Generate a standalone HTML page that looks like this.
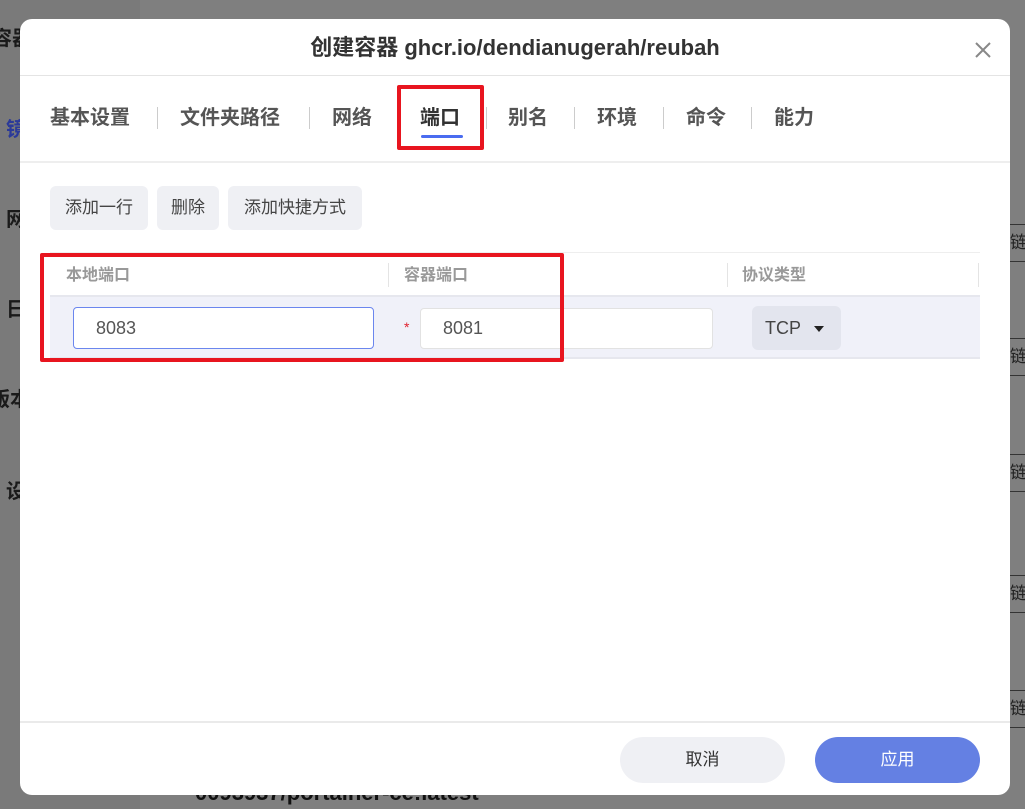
<!DOCTYPE html>
<html><head><meta charset="utf-8"><style>
*{margin:0;padding:0;box-sizing:border-box}
body{width:1025px;height:809px;overflow:hidden;background:#7f7f7f;position:relative;font-family:"Liberation Sans","Noto Sans CJK SC",sans-serif}
.a{position:absolute}
.bg{color:#1a1a1a;font-weight:bold;font-size:20px;line-height:24px}
.lk{position:absolute;left:1010px;width:40px;height:38px;border-top:1px solid #333;border-bottom:1px solid #333;font-size:17px;color:#222;line-height:36px;white-space:nowrap;overflow:hidden}
.modal{left:20px;top:19px;width:990px;height:776px;background:#fff;border-radius:12px;overflow:hidden}
.tab{position:absolute;top:87px;font-size:20px;line-height:24px;font-weight:bold;color:#555}
.sep{position:absolute;top:88px;width:1px;height:22px;background:#ccc}
.btn{position:absolute;top:167px;height:44px;background:#eff0f4;border-radius:6px;font-size:17px;color:#444;line-height:44px;text-align:center}
.th{position:absolute;top:247px;font-size:16px;line-height:20px;font-weight:bold;color:#999}
</style></head><body>
<div class="a" style="left:0;top:0;width:140px;height:809px;background:#7a7a7a"></div>
<div class="a bg" style="left:-8px;top:27px">容器</div>
<div class="a bg" style="left:6px;top:118px;color:#2b3a99">镜</div>
<div class="a bg" style="left:6px;top:208px">网</div>
<div class="a bg" style="left:6px;top:298px">日</div>
<div class="a bg" style="left:-10px;top:388px">版本</div>
<div class="a bg" style="left:6px;top:480px">设</div>
<div class="a" style="left:195px;top:780px;font-size:22px;font-weight:bold;color:#111">0093937/portainer-ce:latest</div>
<div class="lk" style="top:224px">链接</div>
<div class="lk" style="top:338px">链接</div>
<div class="lk" style="top:454px">链接</div>
<div class="lk" style="top:575px">链接</div>
<div class="lk" style="top:690px">链接</div>

<div class="a modal">
  <div class="a" style="left:0;top:16px;width:990px;text-align:center;font-size:22px;line-height:26px;font-weight:bold;color:#333">创建容器 ghcr.io/dendianugerah/reubah</div>
  <svg class="a" style="left:954px;top:22px" width="18" height="18" viewBox="0 0 18 18"><path d="M2 2L16 16M16 2L2 16" stroke="#888" stroke-width="2"/></svg>
  <div class="a" style="left:0;top:56px;width:990px;height:1px;background:#e4e4e4"></div>
  <div class="tab" style="left:30px">基本设置</div>
  <div class="sep" style="left:137px"></div>
  <div class="tab" style="left:160px">文件夹路径</div>
  <div class="sep" style="left:289px"></div>
  <div class="tab" style="left:312px">网络</div>
  <div class="tab" style="left:400px;color:#333">端口</div>
  <div class="a" style="left:401px;top:116px;width:42px;height:3px;background:#4a6cf0;border-radius:2px"></div>
  <div class="a" style="left:377px;top:66px;width:87px;height:65px;border:4px solid #e8151f;border-radius:2px"></div>
  <div class="sep" style="left:466px"></div>
  <div class="tab" style="left:488px">别名</div>
  <div class="sep" style="left:554px"></div>
  <div class="tab" style="left:577px">环境</div>
  <div class="sep" style="left:643px"></div>
  <div class="tab" style="left:666px">命令</div>
  <div class="sep" style="left:731px"></div>
  <div class="tab" style="left:754px">能力</div>
  <div class="a" style="left:0;top:142px;width:990px;height:2px;background:#eee"></div>

  <div class="btn" style="left:30px;width:98px">添加一行</div>
  <div class="btn" style="left:137px;width:62px">删除</div>
  <div class="btn" style="left:208px;width:134px">添加快捷方式</div>

  <div class="a" style="left:30px;top:233px;width:930px;height:1px;background:#eee"></div>
  <div class="th" style="left:46px">本地端口</div>
  <div class="a" style="left:368px;top:244px;width:1px;height:24px;background:#e4e4e4"></div>
  <div class="th" style="left:384px">容器端口</div>
  <div class="a" style="left:707px;top:244px;width:1px;height:24px;background:#e4e4e4"></div>
  <div class="th" style="left:722px">协议类型</div>
  <div class="a" style="left:958px;top:244px;width:1px;height:24px;background:#e4e4e4"></div>
  <div class="a" style="left:30px;top:276px;width:930px;height:64px;background:#f0f1f9;border-top:2px solid #e6e7ee;border-bottom:2px solid #e6e7ee"></div>
  <div class="a" style="left:53px;top:288px;width:301px;height:42px;border:1px solid #6b86ee;border-radius:4px;background:#fff;font-size:18px;color:#555;line-height:40px;padding-left:22px">8083</div>
  <div class="a" style="left:384px;top:300px;color:#e0222f;font-size:14px">*</div>
  <div class="a" style="left:400px;top:289px;width:293px;height:41px;border:1px solid #e2e2e2;border-radius:4px;background:#fff;font-size:18px;color:#555;line-height:39px;padding-left:22px">8081</div>
  <div class="a" style="left:732px;top:287px;width:89px;height:44px;background:#e3e5ee;border-radius:6px;font-size:18px;color:#444;line-height:44px;padding-left:13px">TCP</div>
  <svg class="a" style="left:794px;top:307px" width="10" height="6"><path d="M0 0H10L5 6Z" fill="#222"/></svg>
  <div class="a" style="left:20px;top:234px;width:524px;height:109px;border:4px solid #e8151f;border-radius:2px"></div>

  <div class="a" style="left:0;top:702px;width:990px;height:2px;background:#eaeaea"></div>
  <div class="a" style="left:600px;top:718px;width:165px;height:46px;border-radius:23px;background:#eff0f4;text-align:center;line-height:46px;font-size:17px;color:#333">取消</div>
  <div class="a" style="left:795px;top:718px;width:165px;height:46px;border-radius:23px;background:#6480e3;text-align:center;line-height:46px;font-size:17px;color:#fff">应用</div>
</div>
</body></html>
